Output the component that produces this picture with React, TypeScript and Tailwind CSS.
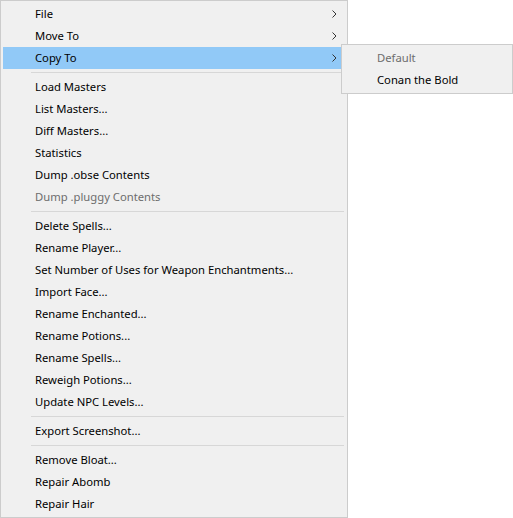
import { ReactNode } from 'react';

type Item = { label: string; sub?: boolean; disabled?: boolean; active?: boolean } | 'sep';

const items: Item[] = [
  { label: 'File', sub: true },
  { label: 'Move To', sub: true },
  { label: 'Copy To', sub: true, active: true },
  'sep',
  { label: 'Load Masters' },
  { label: 'List Masters...' },
  { label: 'Diff Masters...' },
  { label: 'Statistics' },
  { label: 'Dump .obse Contents' },
  { label: 'Dump .pluggy Contents', disabled: true },
  'sep',
  { label: 'Delete Spells...' },
  { label: 'Rename Player...' },
  { label: 'Set Number of Uses for Weapon Enchantments...' },
  { label: 'Import Face...' },
  { label: 'Rename Enchanted...' },
  { label: 'Rename Potions...' },
  { label: 'Rename Spells...' },
  { label: 'Reweigh Potions...' },
  { label: 'Update NPC Levels...' },
  'sep',
  { label: 'Export Screenshot...' },
  'sep',
  { label: 'Remove Bloat...' },
  { label: 'Repair Abomb' },
  { label: 'Repair Hair' },
];

function Chevron() {
  return (
    <svg width="5" height="8" viewBox="0 0 5 8" className="text-[#333]">
      <path d="M0.5 0.5 L4 4 L0.5 7.5" fill="none" stroke="currentColor" strokeWidth="1" />
    </svg>
  );
}

function Row({ children, active, disabled, right }: { children: ReactNode; active?: boolean; disabled?: boolean; right?: ReactNode }) {
  return (
    <div
      className={`flex h-[22px] items-center pl-8 pr-2 ${active ? 'bg-[#91c9f7]' : ''} ${
        disabled ? 'text-[#6d6d6d]' : 'text-black'
      }`}
    >
      <span className="flex-1 whitespace-nowrap">{children}</span>
      {right}
    </div>
  );
}

export default function App() {
  return (
    <div
      className="relative h-[518px] w-[513px] bg-white text-[11.25px] leading-none"
      style={{ fontFamily: '"Noto Sans", "Liberation Sans", sans-serif' }}
    >
      <div className="flex w-[348px] flex-col border border-[#cccccc] bg-[#f0f0f0] p-[2px]">
        {items.map((it, i) =>
          it === 'sep' ? (
            <div key={i} className="flex h-[7px] items-center pl-[28px] pr-[1px]">
              <div className="h-px w-full bg-[#d7d7d7]" />
            </div>
          ) : (
            <Row key={i} active={it.active} disabled={it.disabled} right={it.sub ? <Chevron /> : null}>
              {it.label}
            </Row>
          )
        )}
      </div>

      <div className="absolute left-[341px] top-[44px] flex w-[172px] flex-col border border-[#cccccc] bg-[#f0f0f0] p-[2px]">
        <div className="flex h-[22px] items-center pl-[33px] text-[#6d6d6d]">Default</div>
        <div className="flex h-[22px] items-center pl-[33px] text-black">Conan the Bold</div>
      </div>
    </div>
  );
}
